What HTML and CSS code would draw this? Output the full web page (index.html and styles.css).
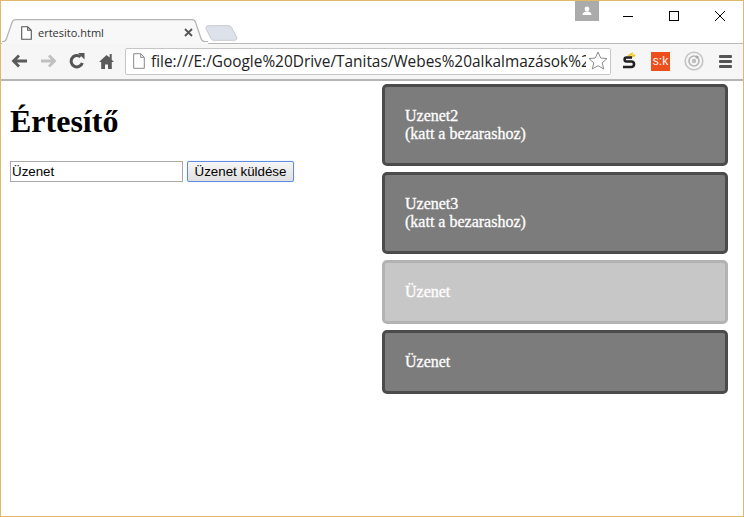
FILE: index.html
```html
<!DOCTYPE html>
<html lang="hu">
<head>
<meta charset="utf-8">
<title>ertesito.html</title>
<link rel="stylesheet" href="styles.css">
</head>
<body>
<div class="window">
  <header class="tabstrip">
    <div class="tab">
      <svg class="tab-shape" width="206" height="25" viewBox="0 0 206 25"><path d="M0 22.500h1c2 0 3-1 3.500-3L10 3.500C10.600 1.800 11.800.6 14 .6h176c2 0 3 1 3.600 2.900l5.400 16c.6 2 2 3 4 3h3V25H0z" fill="#f8f8f8"/><path d="M0 22.500h1c2 0 3-1 3.500-3L10 3.500C10.600 1.800 11.800.6 14 .6h176c2 0 3 1 3.600 2.900l5.400 16c.6 2 2 3 4 3h3" fill="none" stroke="#b4b4b4" stroke-width="1.200"/></svg>
      <svg class="tab-file" width="11" height="14" viewBox="0 0 11 14"><path d="M.7.700h6l3.600 3.600v9H.7zM6.700.7v3.600h3.600" fill="#fff" stroke="#555" stroke-width="1.100"/></svg>
      <span class="tab-title">ertesito.html</span>
      <svg class="tab-close" width="9" height="9" viewBox="0 0 9 9"><path d="M1 1l7 7M8 1L1 8" stroke="#555" stroke-width="1.800"/></svg>
    </div>
    <svg class="new-tab" width="34" height="16" viewBox="0 0 34 16"><path d="M1 3C1 1.500 2 .7 3.500 .7h20c1.500 0 2.300.6 3 1.800l5 9.500c1 1.800 0 3.300-1.800 3.300H9c-1.500 0-2.300-.6-3-1.800L1.400 4.500C1.100 4 1 3.500 1 3z" fill="#dde1ea" stroke="#c5c8cf"/></svg>
    <div class="window-controls">
      <span class="profile"><svg width="12" height="10" viewBox="0 0 12 10"><circle cx="6" cy="3" r="2.400" fill="#fff"/><path d="M1.500 9c0-2.500 2-3.500 4.500-3.500s4.500 1 4.500 3.500z" fill="#fff"/></svg></span>
      <svg class="ctrl" width="46" height="30" viewBox="0 0 46 30"><path d="M18 15.500h10" stroke="#000"/></svg>
      <svg class="ctrl" width="46" height="30" viewBox="0 0 46 30"><rect x="18.500" y="10.500" width="9" height="9" fill="none" stroke="#000"/></svg>
      <svg class="ctrl" width="46" height="30" viewBox="0 0 46 30"><path d="M18 10l10 10M28 10L18 20" stroke="#000"/></svg>
    </div>
  </header>
  <nav class="toolbar">
    <svg class="nav-icon" width="17" height="14" viewBox="0 0 17 14"><path d="M16 7H3M8 1.500L2.500 7 8 12.500" fill="none" stroke="#5a5a5a" stroke-width="2.800"/></svg>
    <svg class="nav-icon" width="17" height="14" viewBox="0 0 17 14"><path d="M1 7h13M9 1.500L14.500 7 9 12.500" fill="none" stroke="#c0c0c0" stroke-width="2.800"/></svg>
    <svg class="nav-icon" width="16" height="16" viewBox="0 0 16 16"><path d="M13.300 10A5.700 5.700 0 1 1 11.500 3.800" fill="none" stroke="#555" stroke-width="3"/><path d="M9 0h6.500v6.500z" fill="#555"/></svg>
    <svg class="nav-icon" width="15" height="16" viewBox="0 0 15 16"><path d="M7.500 2L0 9h2.200v7h3.800v-4.500h3V16h3.800V9H15l-2.300-2.200V1h-2v3.400z" fill="#5a5a5a"/></svg>
    <div class="omnibox">
      <svg class="page-icon" width="12" height="16" viewBox="0 0 12 16"><path d="M.7.700h7l3.600 3.600v11H.7zM7.700.7v3.600h3.600" fill="#fff" stroke="#8a8a8a"/></svg>
      <span class="url">file:///E:/Google%20Drive/Tanitas/Webes%20alkalmazások%20</span>
      <svg class="star" width="24" height="25" viewBox="0 0 24 25"><path d="M12 3l2.700 6 6.300.6-4.800 4.200 1.500 6.200L12 16.700 6.300 20l1.500-6.200L3 9.600 9.300 9z" fill="#fff" stroke="#8c8c8c"/></svg>
    </div>
    <div class="extensions">
      <svg width="16" height="18" viewBox="0 0 16 18"><path d="M7 4l5-3M10 5l4-2" stroke="#f2c81e" stroke-width="2"/><path d="M11 5.500H5.500C3 5.500 3 9.500 5.500 9.500h5C14 9.500 14 15 10 15H2" fill="none" stroke="#222" stroke-width="2.600"/></svg>
      <span class="sk">s:k</span>
      <svg width="20" height="20" viewBox="0 0 20 20"><circle cx="10" cy="10" r="8.800" fill="none" stroke="#c4c4c4" stroke-width="1.600"/><circle cx="10" cy="10" r="5" fill="none" stroke="#b4b4b4" stroke-width="1.600"/><circle cx="10" cy="10" r="2.200" fill="#bdbdbd"/><circle cx="13" cy="6" r="1.600" fill="#a8a8a8"/></svg>
      <span class="menu"><i></i><i></i><i></i></span>
    </div>
  </nav>
  <main class="page">
    <section class="form-area">
      <h1>Értesítő</h1>
      <form class="send-form">
        <input class="msg-input" type="text" value="Üzenet">
        <button class="send-btn" type="button">Üzenet küldése</button>
      </form>
    </section>
    <aside class="notes">
      <div class="note">Uzenet2<br>(katt a bezarashoz)</div>
      <div class="note">Uzenet3<br>(katt a bezarashoz)</div>
      <div class="note fading">Üzenet</div>
      <div class="note">Üzenet</div>
    </aside>
  </main>
</div>
</body>
</html>
```
FILE: styles.css
```css
* { box-sizing: border-box; }
html, body { margin: 0; padding: 0; }
body { width: 744px; height: 517px; overflow: hidden; background: #fff; }
.window {
  width: 744px; height: 517px;
  border: 1px solid #e0b96a;
  display: flex; flex-direction: column;
  background: #fff;
}
.tabstrip {
  height: 43px; flex: none;
  display: flex; align-items: flex-end;
  position: relative;
  padding-left: 1px;
  background: linear-gradient(#fff 42px, #b9b9b9 42px);
}
.tab {
  position: relative;
  width: 206px; height: 25px;
  display: flex; align-items: center;
  padding: 2px 0 0 19px;
  font: 11px "Open Sans", "Liberation Sans", sans-serif;
  color: #333;
}
.tab-shape { position: absolute; left: 0; top: 0; }
.tab-file, .tab-title, .tab-close { position: relative; flex: none; }
.tab-title { margin-left: 6px; width: 146px; }
.new-tab { margin: 0 0 3px -3px; flex: none; }
.window-controls {
  position: absolute; right: 0; top: 0;
  display: flex; align-items: flex-start;
}
.profile {
  width: 24px; height: 20px; margin: 0 6px 0 0;
  background: #ababab;
  display: flex; align-items: center; justify-content: center;
}
.ctrl { display: block; }
.toolbar {
  height: 37px; flex: none;
  display: flex; align-items: center;
  padding: 0 8px 1px 10px;
  background: #f6f6f6;
  border-bottom: 2px solid #b5b5b5;
}
.nav-icon { margin-right: 12px; flex: none; }
.nav-icon:nth-child(3) { margin-right: 14px; }
.nav-icon:nth-child(4) { margin-right: 11px; margin-top: -1px; }
.omnibox {
  width: 486px; height: 27px;
  background: #fff;
  border: 1px solid #c6c6c6;
  border-radius: 2px;
  display: flex; align-items: center;
  padding-left: 7px;
  position: relative;
  overflow: hidden;
  flex: none;
}
.page-icon { flex: none; }
.url {
  margin-left: 6px;
  font: 15.400px "Open Sans", "Liberation Sans", sans-serif;
  color: #222;
  white-space: nowrap;
}
.star { position: absolute; right: 0; top: 0; background: #fff; }
.extensions {
  display: flex; align-items: center; flex: 1;
  padding-left: 10px;
  gap: 14px;
}
.sk {
  width: 19px; height: 19px;
  background: #ec4f1c; color: #fff;
  font: 12px/19px "Liberation Sans", sans-serif;
  text-align: center;
}
.menu { display: flex; flex-direction: column; gap: 2px; margin-left: 1px; }
.menu i { display: block; width: 13px; height: 3px; background: #555; border-radius: 1px; }
.page { flex: 1; display: flex; justify-content: space-between; padding: 3px 15px 0 9px; }
.form-area { flex: none; }
h1 {
  margin: 19px 0 21px;
  font: bold 32px/37px "Liberation Serif", serif;
  color: #000;
}
.send-form { display: flex; align-items: center; gap: 4px; }
.msg-input {
  width: 173px; height: 21px;
  border: 1px solid #a9a9a9;
  padding: 1px;
  font: 13.333px "Liberation Sans", sans-serif;
  color: #000; background: #fff;
}
.send-btn {
  width: 107px; height: 21px;
  border: 1px solid #5f8ee0;
  border-radius: 2px;
  padding: 0;
  font: 13.333px "Liberation Sans", sans-serif;
  color: #000;
  background: linear-gradient(#f6f6f6, #e0e0e0);
  box-shadow: 0 0 1px #8fb0ee;
}
.notes { width: 346px; display: flex; flex-direction: column; gap: 6px; }
.note {
  border: 3px solid #4b4b4b;
  border-radius: 5px;
  background: #7c7c7c;
  color: #fff;
  padding: 20px;
  font: 16px/18px "Liberation Serif", serif;
  -webkit-text-stroke: .3px #fff;
}
.fading { opacity: .42; }
```
